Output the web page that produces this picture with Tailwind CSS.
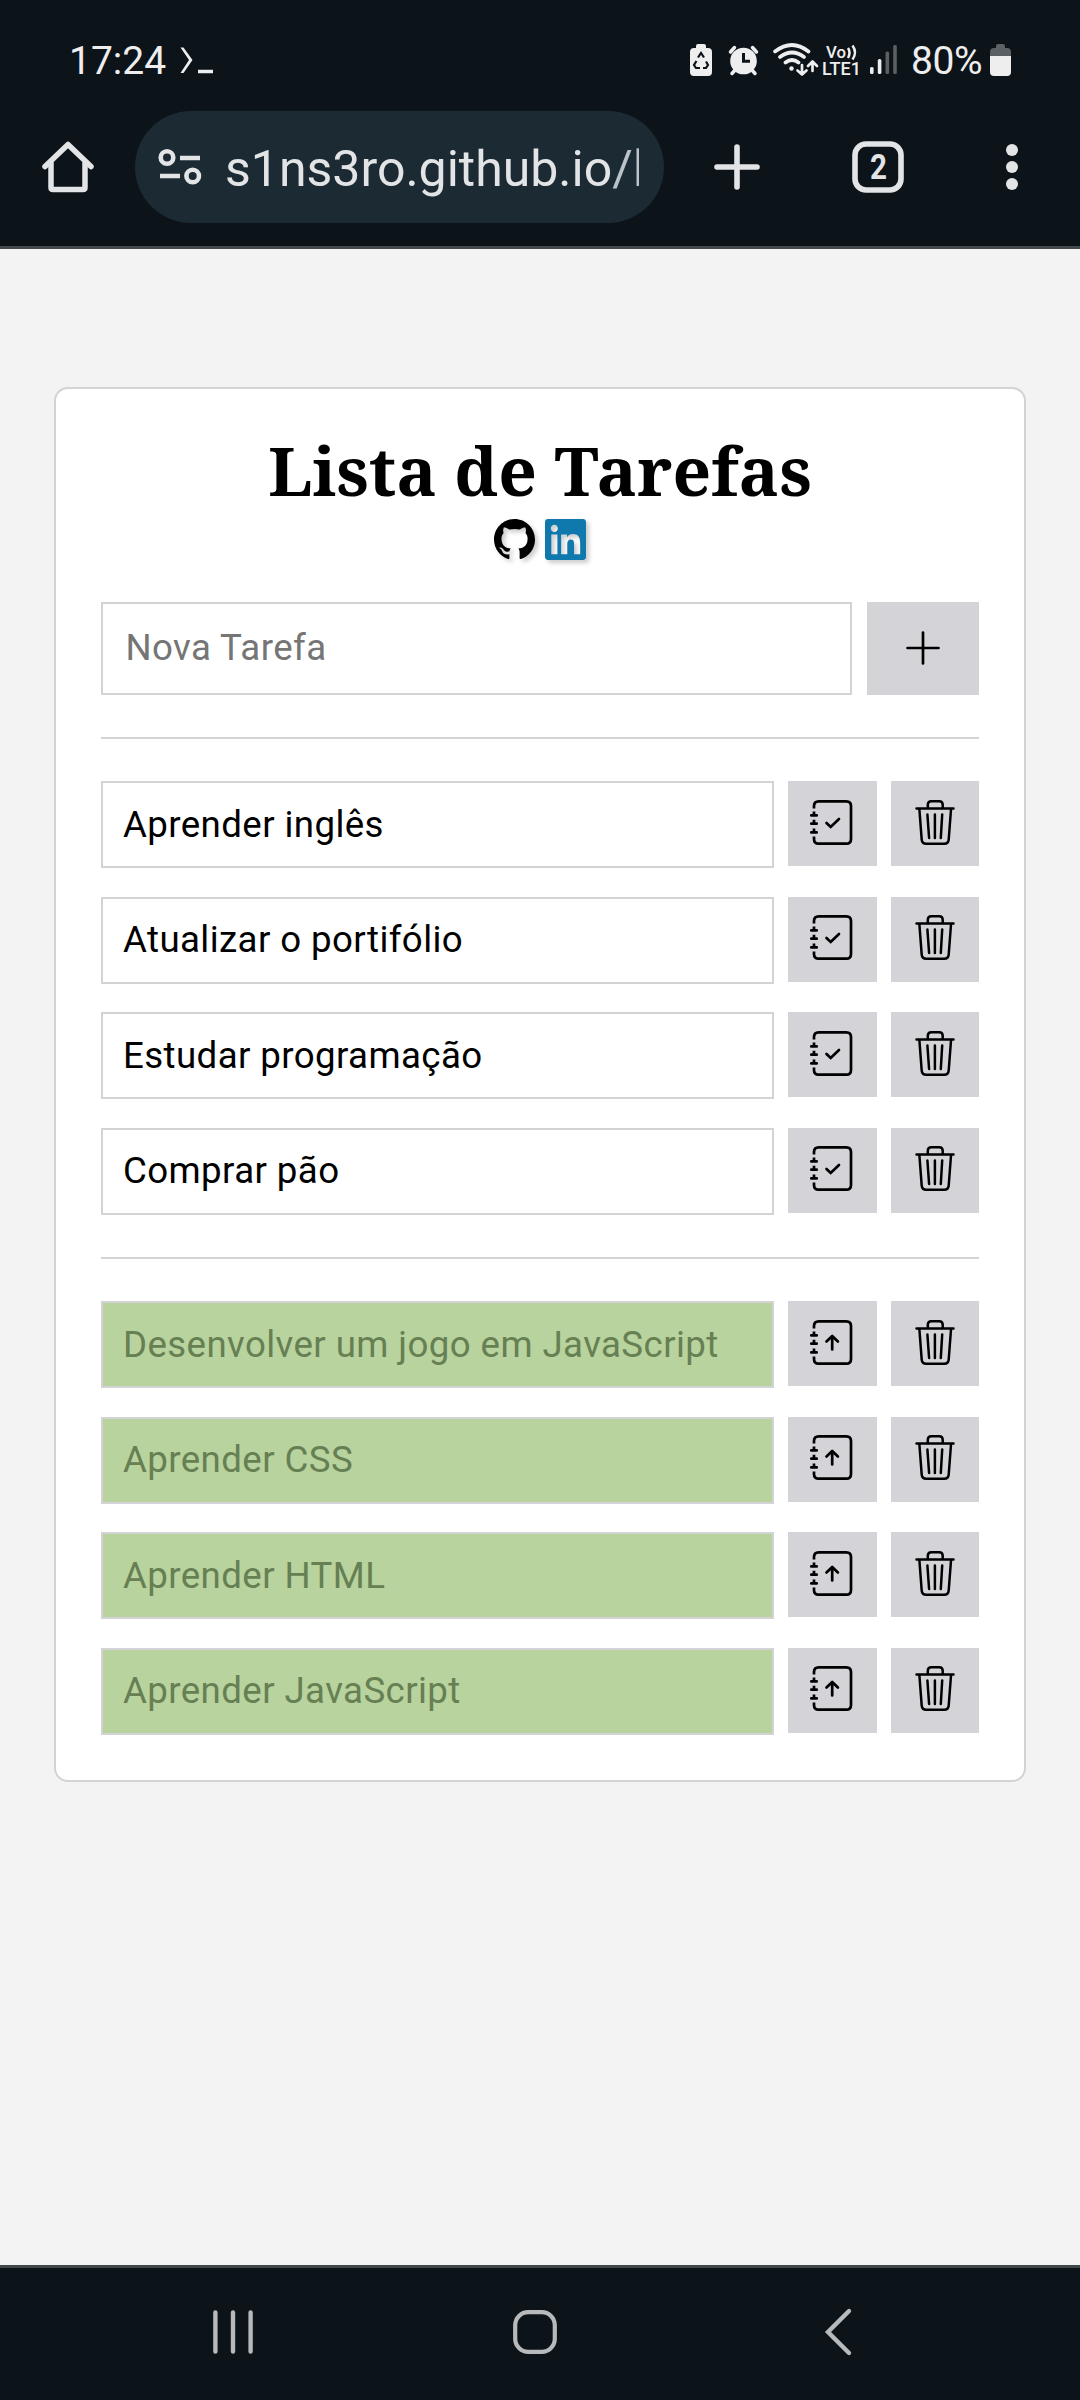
<!DOCTYPE html>
<html lang="pt-BR">
<head>
<meta charset="utf-8">
<title>Lista de Tarefas</title>
<script src="https://cdn.jsdelivr.net/npm/@tailwindcss/browser@4"></script>
</head>
<body class="w-[1080px] h-[2400px] flex flex-col overflow-hidden bg-[#f3f3f3] font-['Roboto',sans-serif]">

<svg class="hidden">
  <defs>
    <g id="notebook" fill="none" stroke="#000" stroke-width="2.7" stroke-linecap="butt" stroke-linejoin="round">
      <path d="M26 27.5V25q0-4.7 4.7-4.7h27.6q4.7 0 4.7 4.7v33q0 4.7-4.7 4.7H30.700q-4.700 0-4.700-4.700v-2.500"/>
      <path d="M23.300 34.400h5.400M23.300 42.700h5.400M23.300 51.400h5.400" stroke-linecap="round"/>
      <path d="M26 30.500v3.500M26 38.800v3.500M26 47.500v3.500"/>
    </g>
    <g id="check"><use href="#notebook"/><path d="M38.500 42l4.200 4L51 38" fill="none" stroke="#000" stroke-width="2.700" stroke-linecap="round"/></g>
    <g id="undo"><use href="#notebook"/><path d="M44.200 48.500V35M38.500 40.500l5.700-5.500 5.700 5.500" fill="none" stroke="#000" stroke-width="2.700" stroke-linecap="round" stroke-linejoin="round"/></g>
    <g id="trash" fill="none" stroke="#000" stroke-width="2.500" stroke-linecap="round" stroke-linejoin="round">
      <path d="M25.500 27.600H62.500M36.800 27v-3.200q0-3.500 3.500-3.500h7.900q3.500 0 3.500 3.500V27M28.400 28.500l2.300 30.200q.4 4.100 4.500 4.100h18q4.100 0 4.500-4.100l2.300-30.200M36.400 33.500l1.700 23.500M43.900 33.500V57M51.200 33.500l-1.400 23.500"/>
    </g>
  </defs>
</svg>

<header class="h-[249px] shrink-0 bg-[#0c1319] border-b-[3px] border-[#43484c] text-[#e3e4e6]">
  <!-- status bar -->
  <div class="h-[111px] pt-[8px] pl-[69px] pr-[69px] flex items-center justify-between text-[#eee]">
    <div class="flex items-center gap-[13px]">
      <span class="pt-[4px] text-[39px] leading-none">17:24</span>
      <svg width="36" height="30" viewBox="180 46 36 30" fill="none" stroke="currentColor" stroke-width="3.500"><path d="M181.500 48.500h3l9 12.500-9 13h-3l8.500-13z" fill="currentColor" stroke="none"/><path d="M199 72.500h15"/></svg>
    </div>
    <div class="flex items-center">
      <svg width="222" height="36" viewBox="690 43 222 36" fill="currentColor">
        <path d="M696 49v-2q0-2 2-2h6q2 0 2 2v2h2q4 0 4 4v20q0 4-4 4h-14q-4 0-4-4V53q0-4 4-4z"/>
        <path d="M698 58.500l3-4.500 3 4.500M706 62.500l2 3.500-2 3h-3M700 69h-4l-2-3 2.500-4" fill="none" stroke="#0c1319" stroke-width="2.200"/>
        <circle cx="743.500" cy="62" r="13.300"/><path d="M730.500 53l4-4.500M756.500 53l-4-4.500M736 70l-4 4.500M751 70l4 4.500" stroke="currentColor" stroke-width="3.500" stroke-linecap="round"/>
        <path d="M743.500 54v8.300h6.500" fill="none" stroke="#0c1319" stroke-width="3"/>
        <g fill="none" stroke="currentColor" stroke-width="3.700" stroke-linecap="round" stroke-linejoin="round"><path d="M775 52.500q17-13 33.500 0M780 58q12-9 24 0M785.500 63.500q6.500-5 13 0"/><path d="M802 66v9M797.500 71.500l4.500 4 4.500-4M812.500 72v-9M808 67l4.500-4.500 4.500 4.500" stroke-width="2.700"/></g><circle cx="791.500" cy="69.500" r="2.200"/>
        <text x="826" y="59" font-size="17" font-weight="500" textLength="20" lengthAdjust="spacingAndGlyphs">Vo</text>
        <path d="M848 49q3 4.500 0 10M852.500 46.500q5 7 0 14" fill="none" stroke="currentColor" stroke-width="2.500"/>
        <text x="822" y="76" font-size="18" font-weight="500" textLength="39" lengthAdjust="spacingAndGlyphs">LTE1</text>
        <rect x="870" y="68" width="3.600" height="7" rx="1.500"/><rect x="877.800" y="60" width="3.600" height="15" rx="1.500"/><rect x="885.500" y="52.500" width="3.600" height="22.500" rx="1.500" fill="#5b6064"/><rect x="893.200" y="46" width="3.600" height="29" rx="1.500" fill="#5b6064"/>
      </svg>
      <span class="pt-[4px] text-[39px] leading-none w-[78px] -ml-[1px] mr-[1px] tracking-[-0.4px]">80%</span>
      <svg width="21" height="32" viewBox="0 0 21 32"><path d="M0 12V8q0-4 4-4h2V2q0-2 2-2h5q2 0 2 2v2h2q4 0 4 4v4z" fill="#5b6064"/><path d="M0 12h21v16q0 4-4 4H4q-4 0-4-4z" fill="#eee"/></svg>
    </div>
  </div>
  <!-- browser toolbar -->
  <div class="h-[112px] flex items-center">
    <svg class="ml-[40px]" width="56" height="56" viewBox="40 139 56 56" fill="none" stroke="currentColor" stroke-width="5.500" stroke-linecap="round" stroke-linejoin="round"><path d="M51 163v24.500q0 2 2 2h30q2 0 2-2V163"/><path d="M45 166.500L68 144.500 91 166.500"/></svg>
    <div class="ml-[39px] w-[529px] h-[112px] rounded-full bg-[#1b2a33] flex items-center">
      <svg class="ml-[22px]" width="46" height="40" viewBox="157 147 46 40" fill="none" stroke="currentColor" stroke-width="4.600"><circle cx="167" cy="157.500" r="6.300"/><path d="M180 158h20M160 176h20"/><circle cx="192.700" cy="176" r="6.300"/></svg>
      <span class="ml-[22px] w-[414px] pt-[3px] overflow-hidden whitespace-nowrap text-[50px] leading-[60px]">s1ns3ro.github.io<span class="text-[#bcc3c8]">/l</span></span>
    </div>
    <svg class="ml-[50px]" width="46" height="46" viewBox="0 0 46 46" stroke="currentColor" stroke-width="5.600" stroke-linecap="round"><path d="M23 3v40M3 23h40"/></svg>
    <svg class="ml-[92px]" width="52" height="52" viewBox="0 0 52 52"><rect x="3" y="3" width="46" height="46" rx="11" fill="none" stroke="currentColor" stroke-width="5.600"/><text x="18" y="38" font-size="35" font-weight="700" fill="currentColor" textLength="17" lengthAdjust="spacingAndGlyphs">2</text></svg>
    <svg class="ml-[102px]" width="12" height="46" viewBox="0 0 12 46" fill="currentColor"><circle cx="6" cy="6" r="6"/><circle cx="6" cy="23" r="6"/><circle cx="6" cy="40" r="6"/></svg>
  </div>
</header>

<main class="flex-1 pt-[138px] px-[54px]">
  <section class="h-[1395px] bg-white border-2 border-[#d3d3d7] rounded-[14px] px-[45px] flex flex-col">
    <h1 class="mt-[34px] h-[96px] text-center whitespace-nowrap font-bold text-[67.6px] leading-[94px] text-black font-['Noto_Serif','DejaVu_Serif_Condensed','DejaVu_Serif',serif]">Lista de Tarefas</h1>
    <div class="flex justify-center gap-[10px] h-[41px]">
      <svg class="drop-shadow-[3px_3px_2px_rgba(0,0,0,0.2)]" width="41" height="41" viewBox="0 0 16 16"><path d="M8 0C3.580 0 0 3.580 0 8c0 3.540 2.290 6.530 5.470 7.590.4.070.55-.17.55-.38 0-.19-.01-.82-.01-1.490-2.010.37-2.530-.49-2.690-.94-.09-.23-.48-.94-.82-1.130-.28-.15-.68-.52-.01-.53.63-.01 1.080.58 1.230.82.72 1.210 1.870.87 2.330.66.070-.52.28-.87.51-1.070-1.780-.2-3.640-.89-3.640-3.950 0-.87.31-1.590.82-2.150-.08-.2-.36-1.020.08-2.120 0 0 .67-.21 2.200.82.64-.18 1.320-.27 2-.27.68 0 1.360.09 2 .27 1.530-1.040 2.200-.82 2.200-.82.44 1.100.16 1.920.08 2.120.51.56.82 1.270.82 2.150 0 3.070-1.870 3.750-3.650 3.950.29.25.54.73.54 1.480 0 1.070-.01 1.930-.01 2.200 0 .21.15.46.55.38A8.010 8.010 0 0 0 16 8c0-4.420-3.580-8-8-8z"/></svg>
      <svg class="drop-shadow-[3px_3px_2px_rgba(0,0,0,0.2)]" width="41" height="41" viewBox="0 32 448 448"><path fill="#0f78ac" d="M416 32H31.900C14.300 32 0 46.500 0 64.300v383.400C0 465.500 14.300 480 31.900 480H416c17.600 0 32-14.500 32-32.300V64.300c0-17.800-14.400-32.300-32-32.300zM135.400 416H69V202.200h66.500V416zm-33.200-243c-21.300 0-38.500-17.300-38.500-38.500S80.900 96 102.200 96c21.200 0 38.500 17.300 38.500 38.500 0 21.300-17.200 38.500-38.500 38.500zm282.100 243h-66.400V312c0-24.800-.5-56.700-34.500-56.700-34.600 0-39.900 27-39.900 54.900V416h-66.400V202.200h63.700v29.200h.9c8.900-16.800 30.600-34.500 62.900-34.500 67.200 0 79.700 44.300 79.700 101.900V416z"/></svg>
    </div>

    <div class="mt-[42px] h-[93px] flex gap-[15px]">
      <div class="w-[751px] border-2 border-[#d3d3d5] pl-[22.5px] pb-[2px] flex items-center text-[36.67px] tracking-[0.4px] text-[#757575]">Nova Tarefa</div>
      <div class="flex-1 bg-[#d4d3d8] pb-[1px] flex items-center justify-center"><svg width="34" height="34" viewBox="0 0 34 34" stroke="#000" stroke-width="2.700" stroke-linecap="round"><path d="M17 1.500v31M1.500 17h31"/></svg></div>
    </div>
    <div class="mt-[42px] h-[2px] bg-[#d3d3d5]"></div>
    <div id="todo" class="mt-[42px] flex flex-col gap-[28.67px]"></div>
    <div class="mt-[42px] h-[2px] bg-[#d3d3d5]"></div>
    <div id="done" class="mt-[42px] flex flex-col gap-[28.67px]"></div>
  </section>
</main>

<nav class="h-[135px] shrink-0 bg-[#0c1319] border-t-[3px] border-[#3f4749] pt-[39px] flex">
  <svg class="ml-[213px]" width="40" height="50" viewBox="213 2307 40 50" stroke="#b7b9ba" stroke-width="4.400" stroke-linecap="round"><path d="M215.400 2312.500v39M233 2312.500v39M250.600 2312.500v39"/></svg>
  <svg class="ml-[260px]" width="44" height="50" viewBox="513 2307 44 50" fill="none" stroke="#b7b9ba" stroke-width="4.200"><rect x="515.200" y="2312.200" width="39.600" height="39.600" rx="13"/></svg>
  <svg class="ml-[267px]" width="30" height="50" viewBox="824 2307 30 50" fill="none" stroke="#b7b9ba" stroke-width="4.400" stroke-linecap="round"><path d="M849 2311l-21 21 21 21"/></svg>
</nav>

<script>
  const row = (text, done, odd) => `
    <div class="h-[87px] flex items-start">
      <div class="w-[673px] h-[87px] border-2 border-[#d3d3d5] pl-[20px] flex items-center text-[36.67px] tracking-[0.4px] whitespace-nowrap ${odd ? 'pb-[2px]' : 'pb-0'} ${done ? 'bg-[#b8d39d] text-[#667f53]' : 'text-black'}">${text}</div>
      <div class="ml-[14px] w-[89px] h-[85px] bg-[#d4d3d8]"><svg class="${odd ? '-mt-[1px]' : 'mt-0'}" width="89" height="85"><use href="#${done ? 'undo' : 'check'}"/></svg></div>
      <div class="ml-[14px] w-[88px] h-[85px] bg-[#d4d3d8]"><svg class="${odd ? '-mt-[1px]' : 'mt-0'}" width="88" height="85"><use href="#trash"/></svg></div>
    </div>`;
  const fill = (id, items, done) => {
    document.getElementById(id).innerHTML = items.map((t, i) => row(t, done, i % 2 === 1)).join('');
  };
  fill('todo', ['Aprender inglês', 'Atualizar o portifólio', 'Estudar programação', 'Comprar pão'], false);
  fill('done', ['Desenvolver um jogo em JavaScript', 'Aprender CSS', 'Aprender HTML', 'Aprender JavaScript'], true);
</script>
</body>
</html>
